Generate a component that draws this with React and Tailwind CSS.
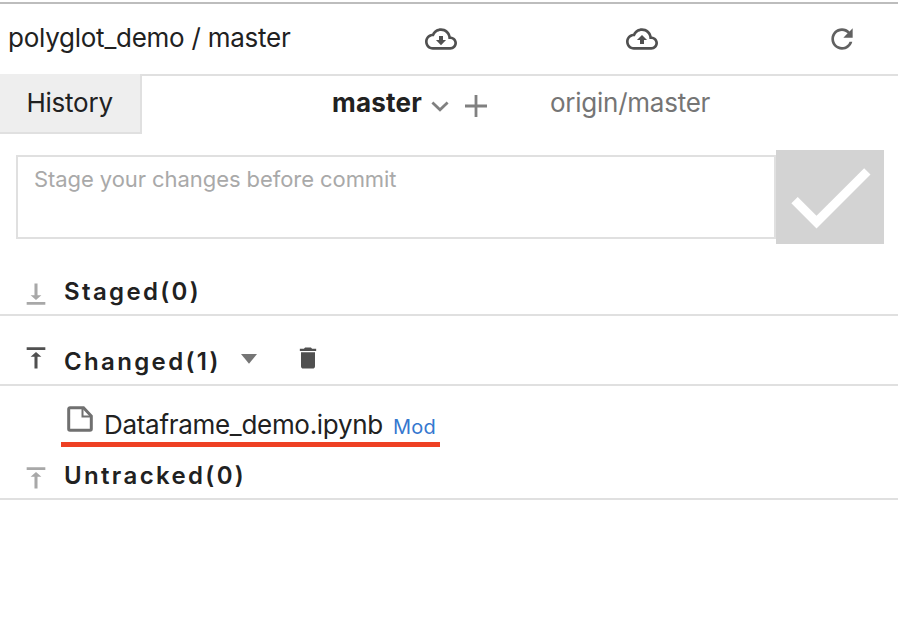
const CLOUD =
  'M19.35 10.04C18.67 6.59 15.64 4 12 4 9.11 4 6.6 5.64 5.35 8.04 2.34 8.36 0 10.91 0 14c0 3.31 2.69 6 6 6h13c2.76 0 5-2.24 5-5 0-2.64-2.05-4.78-4.65-4.96zM19 18H6c-2.21 0-4-1.79-4-4s1.79-4 4-4h.71C7.37 7.69 9.48 6 12 6c3.04 0 5.5 2.46 5.5 5.5v.5H19c1.66 0 3 1.34 3 3s-1.34 3-3 3z';
const PULL = 'M10.5 9.8h3v3h2.3L12 16.6l-3.8-3.8h2.3z';
const PUSH = 'M10.5 15.8h3v-3h2.3L12 9l-3.8 3.8h2.3z';
const REFRESH =
  'M17.65 6.35C16.2 4.9 14.21 4 12 4c-4.42 0-7.99 3.58-7.99 8s3.57 8 7.99 8c3.73 0 6.84-2.55 7.73-6h-2.08c-.82 2.33-3.04 4-5.65 4-3.31 0-6-2.69-6-6s2.69-6 6-6c1.66 0 3.14.69 4.22 1.78L13 11h7V4l-2.35 2.35z';
const CHECK = 'M9 16.17L4.83 12l-1.42 1.41L9 19 21 7l-1.41-1.41z';
const TRASH = 'M6 19c0 1.1.9 2 2 2h8c1.1 0 2-.9 2-2V7H6v12zM19 4h-3.5l-1-1h-5l-1 1H5v2h14V4z';
const TO_BOTTOM = 'M16.6 13h-3.3V3h-2.6V13H7.4l4.6 4.2 4.6-4.2zM4 18.8v2.4h16v-2.4H4z';
const TO_TOP = 'M7.4 11h3.3v10h2.6V11h3.3L12 6.8 7.4 11zM4 2.8v2.4h16V2.8H4z';

function Icon({ d, className }) {
  return (
    <svg viewBox="0 0 24 24" fill="currentColor" className={`shrink-0 ${className}`}>
      <path d={d} />
    </svg>
  );
}

function Section({ icon, iconClass, title, className, titleClass, children }) {
  return (
    <div className={`flex items-center border-b-2 border-[#e0e0e0] pl-[22px] ${className}`}>
      <Icon d={icon} className={`size-7 ${iconClass}`} />
      <span className={`ml-3.5 text-[24px] leading-8 font-semibold tracking-[2.35px] ${titleClass}`}>{title}</span>
      {children}
    </div>
  );
}

export default function App() {
  return (
    <div className="h-[644px] w-[898px] overflow-hidden bg-white pt-0.5 font-[Inter,'Liberation_Sans',sans-serif] text-[26px] leading-8 text-[#212121]">
      <header className="flex h-[72px] items-center border-t-2 border-[#bdbdbd] text-[#505050]">
        <span className="w-[425px] pb-[3px] pl-2 tracking-[-0.25px] whitespace-nowrap text-[#212121]">
          polyglot_demo / master
        </span>
        <Icon d={CLOUD + PULL} className="size-8" />
        <Icon d={CLOUD + PUSH} className="ml-[169px] size-8" />
        <Icon d={REFRESH} className="ml-[168px] size-8 text-[#616161]" />
      </header>

      <nav className="flex h-[60px]">
        <div className="w-[142px] border-r-2 border-b-2 border-[#e0e0e0] bg-[#eeeeee] pt-[13px] pl-[26.5px]">
          <span className="tracking-[-0.25px]">History</span>
        </div>
        <div className="flex flex-1 items-start border-t-2 border-[#e0e0e0] pt-[11px] pl-[190px] text-[#757575]">
          <span className="w-[98px] font-bold tracking-[0.2px] text-[#212121]">master</span>
          <svg viewBox="0 0 20 14" className="mt-[13px] h-3.5 w-5" fill="none" stroke="#808080" strokeWidth="2.8">
            <path d="M2.4 2.6 10 9.8l7.6-7.2" />
          </svg>
          <svg viewBox="0 0 22 22" className="mt-[8px] ml-[15px] size-[22px]" fill="none" stroke="#808080" strokeWidth="2.8">
            <path d="M11 0v22M0 11h22" />
          </svg>
          <span className="ml-[63px] tracking-[-0.25px]">origin/master</span>
        </div>
      </nav>

      <div className="mt-4 flex h-[94px] items-center pl-4">
        <div className="h-[84px] w-[760px] border-2 border-[#e0e0e0] pt-[6px] pl-4 text-[22px] tracking-[-0.07px] text-[#a9a9a9]">
          Stage your changes before commit
        </div>
        <button className="flex h-[94px] w-[108px] items-center justify-center overflow-hidden bg-[#d3d3d3] text-white">
          <Icon d={CHECK} className="size-[108px]" />
        </button>
      </div>

      <Section icon={TO_BOTTOM} iconClass="mt-[29px] text-[#a8a8a8]" title="Staged(0)" className="h-[72px]" titleClass="mt-[25px]" />
      <Section icon={TO_TOP} iconClass="mt-4 text-[#505050]" title="Changed(1)" className="h-[70px]" titleClass="mt-[23px] w-[177px]">
        <svg viewBox="0 0 16 10" className="mt-[18px] h-2.5 w-4" fill="#757575">
          <path d="M0 0h16L8 9.8z" />
        </svg>
        <Icon d={TRASH} className="mt-4 ml-[37px] size-7 text-[#505050]" />
      </Section>

      <div className="ml-[60.5px] flex h-[61px] w-[379px] items-start pt-[23px] pl-1.5 shadow-[inset_0_-5px_0_#ee4023]">
        <svg viewBox="0 0 26 26" className="-mt-[3px] size-[26px] shrink-0" fill="none" stroke="#707070" strokeWidth="3">
          <path d="M3 1.7h13.5L24.3 10v13a1.3 1.3 0 0 1-1.3 1.300H3A1.3 1.3 0 0 1 1.7 23V3A1.3 1.3 0 0 1 3 1.7z" />
          <path d="M15.5 2v8.5H24" strokeWidth="2" />
        </svg>
        <span className="ml-[11.5px] w-[289px] tracking-[-0.3px] whitespace-nowrap">Dataframe_demo.ipynb</span>
        <span className="mt-0.5 text-[20px] tracking-[0.2px] text-[#3578cf]">Mod</span>
      </div>

      <Section icon={TO_TOP} iconClass="mt-[11px] text-[#a8a8a8]" title="Untracked(0)" className="h-[53px]" titleClass="mt-[7px]" />
    </div>
  );
}
